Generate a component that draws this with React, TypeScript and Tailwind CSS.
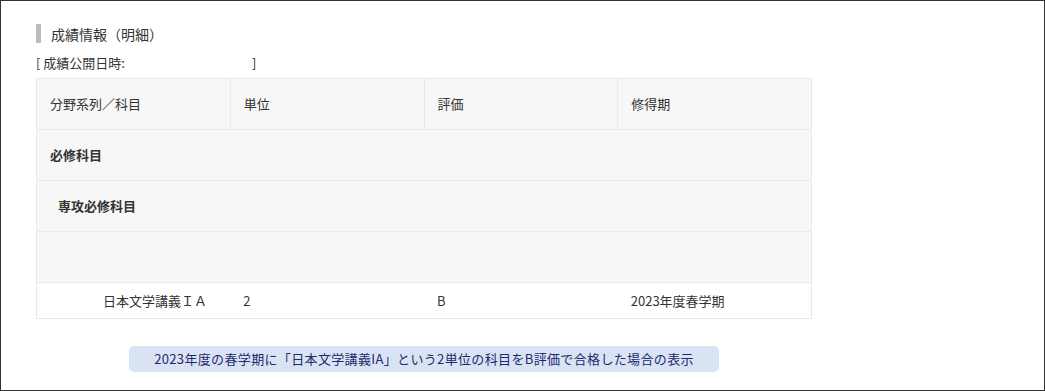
import React from 'react';

interface GradeRow {
  subject: string;
  credits: string;
  grade: string;
  term: string;
}

const rows: GradeRow[] = [
  { subject: '日本文学講義ＩＡ', credits: '2', grade: 'B', term: '2023年度春学期' },
];

const headers = ['分野系列／科目', '単位', '評価', '修得期'];

const App: React.FC = () => {
  return (
    <div
      className="w-[1045px] h-[391px] border border-[#333] bg-white text-[#333] pl-[35px] pt-[23px]"
      style={{ fontFamily: '"Noto Sans CJK JP", "Noto Sans", sans-serif' }}
    >
      {/* Section title */}
      <div className="flex items-center h-[19px] border-l-[5px] border-[#bdbdbd] pl-[10px] text-[14px] leading-none">
        成績情報（明細）
      </div>

      <div className="flex text-[13px] leading-none mt-[12px] h-[14px] items-center">
        <span className="w-[216px]">[ 成績公開日時:</span>
        <span>]</span>
      </div>

      {/* Grade table */}
      <table className="mt-[9px] w-[776px] border-collapse text-[13px] table-fixed">
        <thead>
          <tr className="h-[51px] bg-[#f7f7f7]">
            {headers.map((h) => (
              <th
                key={h}
                className="border border-[#e9e9e9] text-left font-normal px-[13px]"
              >
                {h}
              </th>
            ))}
          </tr>
        </thead>
        <tbody>
          <tr className="h-[51px] bg-[#f7f7f7]">
            <td colSpan={4} className="border border-[#e9e9e9] px-[13px] font-bold">
              必修科目
            </td>
          </tr>
          <tr className="h-[51px] bg-[#f7f7f7]">
            <td colSpan={4} className="border border-[#e9e9e9] pl-[21px] font-bold">
              専攻必修科目
            </td>
          </tr>
          <tr className="h-[51px] bg-[#f7f7f7]">
            <td colSpan={4} className="border border-[#e9e9e9]"></td>
          </tr>
          {rows.map((r) => (
            <tr key={r.subject} className="h-[36px] bg-white border border-[#e9e9e9]">
              <td className="pl-[66px]">{r.subject}</td>
              <td className="px-[13px]">{r.credits}</td>
              <td className="px-[13px]">{r.grade}</td>
              <td className="px-[13px]">{r.term}</td>
            </tr>
          ))}
        </tbody>
      </table>

      {/* Caption */}
      <div className="ml-[93px] mt-[27px] w-[590px] h-[26px] rounded-[5px] bg-[#dae3f3] text-[#1f2a6e] text-[13px] tracking-[0.35px] flex items-center justify-center">
        2023年度の春学期に「日本文学講義IA」という2単位の科目をB評価で合格した場合の表示
      </div>
    </div>
  );
};

export default App;
